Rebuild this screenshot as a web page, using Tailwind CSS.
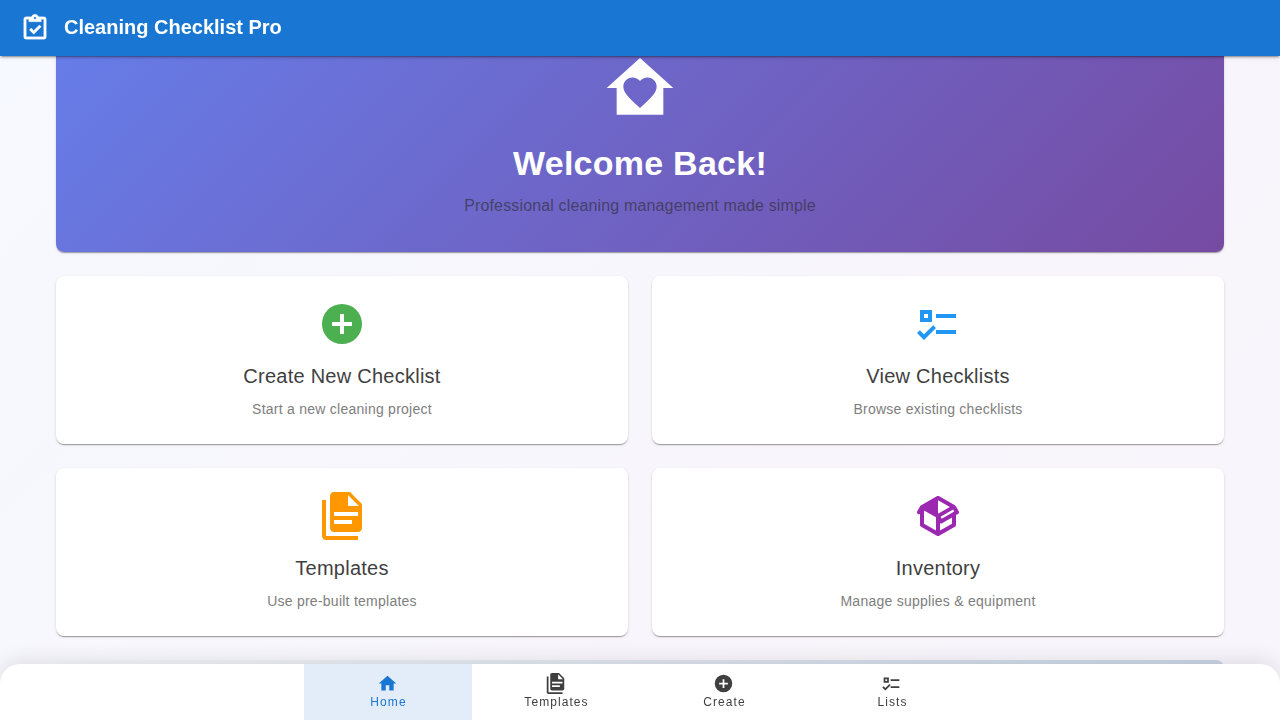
<!DOCTYPE html>
<html lang="en">
<head>
<meta charset="utf-8">
<meta name="viewport" content="width=device-width, initial-scale=1">
<title>Cleaning Checklist Pro</title>
<script src="https://cdn.jsdelivr.net/npm/@tailwindcss/browser@4"></script>
</head>
<body class="bg-[#f8f7fc] font-['Liberation_Sans',Arial,sans-serif] text-[#3f3f3f]">
<svg class="hidden" aria-hidden="true">
  <symbol id="icon-home" viewBox="0 0 24 24"><path d="M10,20V14H14V20H19V12H22L12,3L2,12H5V20H10Z"/></symbol>
  <symbol id="icon-plus" viewBox="0 0 24 24"><path d="M17,13H13V17H11V13H7V11H11V7H13V11H17M12,2A10,10 0 0,0 2,12A10,10 0 0,0 12,22A10,10 0 0,0 22,12A10,10 0 0,0 12,2Z"/></symbol>
  <symbol id="icon-checks" viewBox="0 0 24 24"><path d="M3,5H9V11H3V5M5,7V9H7V7H5M11,7H21V9H11V7M11,15H21V17H11V15M5,20L1.5,16.5L2.91,15.09L5,17.17L9.59,12.59L11,14L5,20Z"/></symbol>
  <symbol id="icon-docs" viewBox="0 0 24 24"><path fill-rule="evenodd" d="M16,0H8C6.9,0 6,0.9 6,2V18C6,19.1 6.9,20 8,20H20C21.1,20 22,19.1 22,18V6L16,0M15,7V1.5L20.5,7H15M8,10H20V12H8V10M8,14H17V16H8V14M4,4V22H20V24H4C2.9,24 2,23.1 2,22V4H4Z"/></symbol>
  <symbol id="icon-box" viewBox="0 0 24 24"><path d="M2,10.96C1.5,10.68 1.35,10.07 1.63,9.59L3.13,7C3.24,6.8 3.41,6.66 3.6,6.58L11.43,2.18C11.59,2.06 11.79,2 12,2C12.21,2 12.41,2.06 12.57,2.18L20.47,6.62C20.66,6.72 20.82,6.88 20.91,7.08L22.36,9.6C22.64,10.08 22.47,10.69 22,10.96L21,11.54V16.5C21,16.88 20.79,17.21 20.47,17.38L12.57,21.82C12.41,21.94 12.21,22 12,22C11.79,22 11.59,21.94 11.43,21.82L3.53,17.38C3.21,17.21 3,16.88 3,16.5V10.96C2.7,11.13 2.32,11.14 2,10.96M12,4.15V4.15L12,10.85V10.85L17.96,7.5L12,4.15M5,15.91L11,19.29V12.58L5,9.21V15.91M19,15.91V12.69L14,15.59C13.67,15.77 13.3,15.76 13,15.6V19.29L19,15.91M13.85,13.36L20.13,9.73L19.55,8.72L13.27,12.35L13.85,13.36Z"/></symbol>
</svg>

<header class="fixed inset-x-0 top-0 z-10 flex h-14 items-center bg-[#1976d2] px-5 text-white shadow-[0_3px_1px_-2px_rgba(0,0,0,.2),0_2px_2px_0_rgba(0,0,0,.14),0_1px_5px_0_rgba(0,0,0,.12)]">
  <h1 class="flex items-center gap-3.5 text-xl leading-7 font-bold">
    <svg class="size-[30px] fill-current stroke-current stroke-[0.25]" viewBox="0 0 24 24" aria-hidden="true"><path d="M19,3H14.82C14.4,1.84 13.3,1 12,1C10.7,1 9.6,1.84 9.18,3H5A2,2 0 0,0 3,5V19A2,2 0 0,0 5,21H19A2,2 0 0,0 21,19V5A2,2 0 0,0 19,3M12,3A1,1 0 0,1 13,4A1,1 0 0,1 12,5A1,1 0 0,1 11,4A1,1 0 0,1 12,3M7,7H17V5H19V19H5V5H7V7M7.5,13.5L9,12L11,14L15.5,9.5L17,11L11,17L7.5,13.5Z"/></svg>
    <span class="pb-0.5">Cleaning Checklist Pro</span>
  </h1>
</header>

<main class="h-screen overflow-hidden bg-[linear-gradient(135deg,#f6f9ff_0%,#f8f5fb_75%,#f9f5fc_100%)]">
  <div class="mx-auto flex max-w-[1200px] flex-col gap-6 px-4 pt-4">
    <section class="flex flex-col items-center rounded-lg bg-[linear-gradient(135deg,#667eea_0%,#764ba2_100%)] p-8 text-center shadow-[0_2px_1px_-1px_rgba(0,0,0,.2),0_1px_1px_0_rgba(0,0,0,.14),0_1px_3px_0_rgba(0,0,0,.12)]">
      <svg class="mb-4 size-20 fill-white" viewBox="0 0 24 24" aria-hidden="true"><path fill-rule="evenodd" d="M12,18L11.27,17.33C8.7,15 7,13.46 7,11.57C7,10.03 8.21,8.82 9.75,8.82C10.62,8.82 11.45,9.23 12,9.87C12.55,9.23 13.38,8.82 14.25,8.82C15.79,8.82 17,10.03 17,11.57C17,13.46 15.3,15 12.73,17.33L12,18M5,20H19V12H22L12,3L2,12H5V20Z"/></svg>
      <h2 class="mb-2.5 text-[34px] leading-[38px] font-bold tracking-[0.0073529em] text-white">Welcome Back!</h2>
      <p class="text-base leading-7 tracking-[0.009375em] text-[#282828]/60">Professional cleaning management made simple</p>
    </section>

    <div class="grid grid-cols-1 gap-6 sm:grid-cols-2">
      <a href="#create" class="flex flex-col items-center rounded-lg bg-white p-6 text-center shadow-[0_2px_1px_-1px_rgba(0,0,0,.2),0_1px_1px_0_rgba(0,0,0,.14),0_1px_3px_0_rgba(0,0,0,.12)]">
        <svg class="mb-3 size-12 fill-[#4caf50]" aria-hidden="true"><use href="#icon-plus"/></svg>
        <h3 class="mb-1.5 text-xl leading-8 tracking-[0.0125em]">Create New Checklist</h3>
        <p class="text-sm leading-[22px] tracking-[0.0178571em] text-[#7e7e7e]">Start a new cleaning project</p>
      </a>
      <a href="#lists" class="flex flex-col items-center rounded-lg bg-white p-6 text-center shadow-[0_2px_1px_-1px_rgba(0,0,0,.2),0_1px_1px_0_rgba(0,0,0,.14),0_1px_3px_0_rgba(0,0,0,.12)]">
        <svg class="mb-3 size-12 fill-[#2196f3]" aria-hidden="true"><use href="#icon-checks"/></svg>
        <h3 class="mb-1.5 text-xl leading-8 tracking-[0.0125em]">View Checklists</h3>
        <p class="text-sm leading-[22px] tracking-[0.0178571em] text-[#7e7e7e]">Browse existing checklists</p>
      </a>
      <a href="#templates" class="flex flex-col items-center rounded-lg bg-white p-6 text-center shadow-[0_2px_1px_-1px_rgba(0,0,0,.2),0_1px_1px_0_rgba(0,0,0,.14),0_1px_3px_0_rgba(0,0,0,.12)]">
        <svg class="mb-3 size-12 fill-[#ff9800]" aria-hidden="true"><use href="#icon-docs"/></svg>
        <h3 class="mb-1.5 text-xl leading-8 tracking-[0.0125em]">Templates</h3>
        <p class="text-sm leading-[22px] tracking-[0.0178571em] text-[#7e7e7e]">Use pre-built templates</p>
      </a>
      <a href="#inventory" class="flex flex-col items-center rounded-lg bg-white p-6 text-center shadow-[0_2px_1px_-1px_rgba(0,0,0,.2),0_1px_1px_0_rgba(0,0,0,.14),0_1px_3px_0_rgba(0,0,0,.12)]">
        <svg class="mb-3 size-12 fill-[#9c27b0]" aria-hidden="true"><use href="#icon-box"/></svg>
        <h3 class="mb-1.5 text-xl leading-8 tracking-[0.0125em]">Inventory</h3>
        <p class="text-sm leading-[22px] tracking-[0.0178571em] text-[#7e7e7e]">Manage supplies &amp; equipment</p>
      </a>
    </div>

    <section class="h-48 rounded-lg bg-[linear-gradient(135deg,#f5f7fa_0%,#c3cfe2_100%)]"></section>
  </div>
</main>

<nav class="fixed inset-x-0 bottom-0 z-10 flex h-14 justify-center overflow-hidden rounded-t-[20px] bg-white text-xs tracking-[0.0892857em] shadow-[0_-4px_20px_rgba(0,0,0,.1)]">
  <a href="#home" aria-current="page" class="flex max-w-[168px] flex-1 flex-col items-center bg-[#e3edf9] pt-[9px] text-[#1976d2]">
    <svg class="mr-px size-[21px] fill-current" aria-hidden="true"><use href="#icon-home"/></svg><span class="pl-px leading-4">Home</span>
  </a>
  <a href="#templates" class="flex max-w-[168px] flex-1 flex-col items-center pt-[9px]">
    <svg class="mr-px size-[21px] fill-current" aria-hidden="true"><use href="#icon-docs"/></svg><span class="pl-px leading-4">Templates</span>
  </a>
  <a href="#create" class="flex max-w-[168px] flex-1 flex-col items-center pt-[9px]">
    <svg class="mr-px size-[21px] fill-current" aria-hidden="true"><use href="#icon-plus"/></svg><span class="pl-px leading-4">Create</span>
  </a>
  <a href="#lists" class="flex max-w-[168px] flex-1 flex-col items-center pt-[9px]">
    <svg class="mr-px size-[21px] fill-current" aria-hidden="true"><use href="#icon-checks"/></svg><span class="pl-px leading-4">Lists</span>
  </a>
</nav>
</body>
</html>
